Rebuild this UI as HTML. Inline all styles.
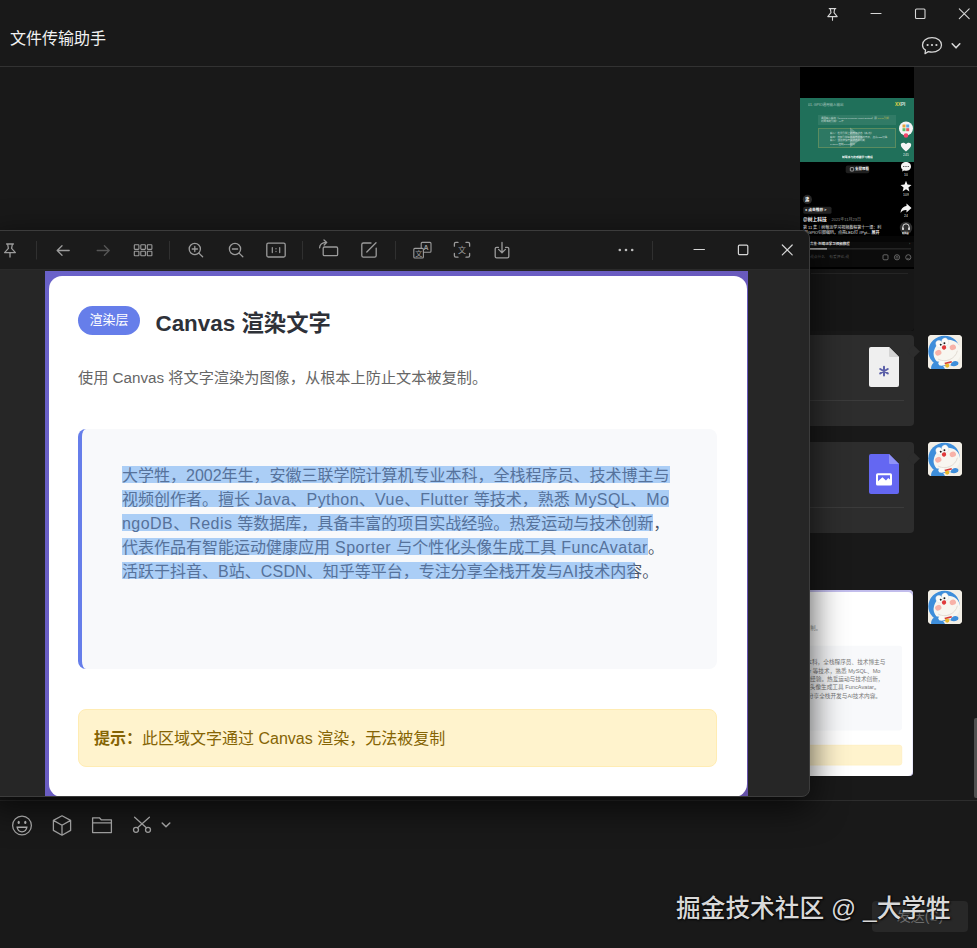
<!DOCTYPE html>
<html lang="zh-CN">
<head>
<meta charset="utf-8">
<title>文件传输助手</title>
<style>
*{box-sizing:border-box;margin:0;padding:0}
html,body{width:977px;height:948px;overflow:hidden;background:#191919}
body{position:relative;font-family:"Liberation Sans","Noto Sans CJK SC",sans-serif;color:#e8e8e8}
.abs{position:absolute}
svg{position:absolute;overflow:visible}
.hicon{stroke:#d6d6d6;fill:none;stroke-width:1.2;stroke-linecap:round;stroke-linejoin:round}
.vicon{stroke:#9b9b9b;fill:none;stroke-width:1.3;stroke-linecap:round;stroke-linejoin:round}
/* header */
#title{left:10px;top:26.5px;font-size:16px;line-height:24px;color:#f2f2f2;white-space:nowrap}
#hdiv{left:0;top:66px;width:977px;height:1px;background:#323232}
/* bubbles */
.bubble{left:664px;width:250px;height:91px;background:#2d2d2d;border-radius:4px}
.bubble .ln{position:absolute;left:10px;right:10px;top:65px;height:1px;background:#3b3b3b}
.bubble .arr{position:absolute;right:-4px;top:12px;width:9px;height:9px;background:#2d2d2d;transform:rotate(45deg)}
.avatar{left:928px;width:34px;height:34px;border-radius:4px;overflow:hidden;background:#f1ede4}
/* viewer */
#viewer{left:-10px;top:230px;width:819.5px;height:567px;background:#262626;border:1px solid #3c3c3c;border-radius:8px;overflow:hidden;box-shadow:0 10px 34px 1px rgba(0,0,0,.68)}
#vbar{left:0;top:0;width:100%;height:39px;background:#1b1b1b;border-bottom:1px solid #2a2a2a}
.vsep{width:1px;height:19px;top:10px;background:#3a3a3a}
/* card */
.imgwrap{left:54px;top:39.5px;width:703px;height:527px;background:linear-gradient(135deg,#6a62c9 0%,#6a5cc2 45%,#6450a8 100%);overflow:hidden}
.card{left:3.5px;top:5.5px;width:698.5px;height:521px;background:#fff;border-radius:13px;color:#333}
.badge{left:29.5px;top:29.5px;width:62px;height:29px;border-radius:15px;background:#667eea;color:#fff;font-size:13px;line-height:28px;text-align:center}
.ctitle{left:107px;top:32.4px;font-size:22.4px;line-height:32px;font-weight:700;color:#2e3138;white-space:nowrap}
.cdesc{left:29.5px;top:90px;font-size:15.2px;line-height:24px;color:#666;white-space:nowrap}
.quote{left:29.5px;top:152.5px;width:638.5px;height:240px;background:#f8f9fb;border-left:4px solid #667eea;border-radius:8px}
.ql{position:absolute;left:40px;height:24px;font-size:16px;line-height:25.4px;color:#4a5568;white-space:nowrap}
.hl{display:inline-block;height:17.6px;line-height:19.4px;margin-top:3px;background:#abcef6;color:#56729b;vertical-align:top;position:relative}
.ql i{font-style:normal;letter-spacing:.45px}
.half{display:inline-block;width:9px;overflow:hidden;vertical-align:top;height:19.4px}
.rest{display:inline-block;width:7px;height:24px;overflow:hidden;vertical-align:top;direction:rtl}
.hint{left:29.5px;top:433px;width:638.5px;height:58px;background:#fff3cd;border:1px solid #ffecb3;border-radius:8px;color:#856404;font-size:16px;line-height:57.6px;padding-left:15px;white-space:nowrap}
.hint b{font-weight:700}

/* video thumb */
#vid{left:800px;top:67px;width:114px;height:264px;background:#000;overflow:hidden;border-radius:0 0 3px 3px}
#vid .t{position:absolute;white-space:nowrap;color:#fff;font-size:8px;line-height:8px;transform-origin:0 0;transform:scale(.5)}
#vid .g{position:absolute;left:0;top:30.8px;width:114px;height:64.2px;background:#20705a}
/* thumb bubble */
#thumb{left:665px;top:590px;width:248px;height:186px;border-radius:4px;overflow:hidden;background:#fff}
#thumb .imgwrap{left:0;top:0;transform-origin:0 0;transform:scale(.3528)}
#thumb .ql{color:#777}
#thumb .imgwrap{background:#c2bdec}
#thumb .cdesc{color:#999}
#l4 i{letter-spacing:.53px}
#l5 i{letter-spacing:.15px}
/* input */
#idiv{left:0;top:800px;width:977px;height:1px;background:#2d2d2d}
#send{left:872px;top:901px;width:96px;height:31px;border-radius:4px;background:#282828;color:#6d6d6d;font-size:14px;line-height:31px;text-align:center}
#wm{left:676px;top:890.5px;font-size:24.7px;line-height:36px;color:#d9d9d9;white-space:nowrap;font-weight:500;text-shadow:0 0 2px rgba(0,0,0,.9),1px 1px 2px rgba(0,0,0,.8);letter-spacing:0}
#sbar{left:974px;top:718px;width:3px;height:80px;background:#4f4f4f;border-radius:2px 0 0 2px}
#icons{left:0;top:0;width:977px;height:948px;pointer-events:none}
.itx{font-family:"Liberation Sans","Noto Sans CJK SC",sans-serif;fill:#9b9b9b;stroke:none}
</style>
</head>
<body>
<!-- HEADER -->
<div class="abs" id="title">文件传输助手</div>
<div class="abs" id="hdiv"></div>


<!-- VIDEO THUMB -->
<div class="abs" id="vid">
  <div class="g"></div>
  <div class="t" style="left:8px;top:35.6px;font-size:7px;opacity:.55">01. GPIO通用输入输出</div>
  <div class="t" style="left:95px;top:34.6px;font-size:9px;font-weight:700;color:#dfe9e4"><span style="color:#e7d84a">XX</span>PI</div>
  <div class="abs" style="left:18px;top:47.5px;width:77.5px;height:10.5px;background:rgba(255,255,255,.08)"></div>
  <div class="t" style="left:21px;top:49px;font-size:5px;line-height:6px;opacity:.7">通用输入输出（General Purpose Input Output）即 <span style="color:#e6d64a">GPIO引脚</span><br>树莓派的引脚：40个</div>
  <div class="abs" style="left:18px;top:61px;width:77.5px;height:20px;background:rgba(255,255,255,.06);border:.5px solid rgba(200,190,90,.3)"></div>
  <div class="t" style="left:30px;top:63.5px;font-size:5px;line-height:7.6px;opacity:.7">输入：检测引脚上的电平状态（高/低）<br>输出：控制引脚输出高电平或低电平，点亮LED灯等<br>输入：读取按键开关状态并判断<br>Python 控制GPIO接口</div>
  <svg viewBox="0 0 114 264" width="114" height="264" style="left:0;top:0">
    <path d="M50 60.5 L63.5 70.5 L50 80.5Z" fill="rgba(255,255,255,.24)"/>
    <circle cx="106" cy="61.5" r="7" fill="#f4f4f4"/>
    <rect x="102.5" y="57.5" width="3" height="3" fill="#e8a23a"/><rect x="106.2" y="57.5" width="3" height="3" fill="#58a7e0"/><rect x="102.5" y="61.2" width="3" height="3" fill="#5fbf6a"/><rect x="106.2" y="61.2" width="3" height="3" fill="#e0585f"/>
    <circle cx="106" cy="68.5" r="2.3" fill="#f0466a"/>
    <path d="M106 84.5 C103 82 100.8 80 100.8 77.8 C100.8 75.6 104 74.8 106 77.2 C108 74.8 111.2 75.6 111.2 77.8 C111.2 80 109 82 106 84.5Z" fill="#f4f4f4"/>
    <path d="M101 99.5 C101 96.5 103.3 95 106 95 C108.7 95 111 96.5 111 99.5 C111 102.2 108.7 103.8 106 103.8 C105.3 103.8 104.7 103.7 104.1 103.5 L102 104.6 L102.6 102.7 C101.6 101.9 101 100.8 101 99.5Z" fill="#f4f4f4"/>
    <circle cx="103.8" cy="99.5" r=".6" fill="#111"/><circle cx="106" cy="99.5" r=".6" fill="#111"/><circle cx="108.2" cy="99.5" r=".6" fill="#111"/>
    <path d="M106 113.8 L107.5 117.6 L111.5 117.9 L108.4 120.5 L109.4 124.4 L106 122.3 L102.6 124.4 L103.6 120.5 L100.5 117.9 L104.5 117.6Z" fill="#f4f4f4"/>
    <path d="M106.5 136.5 L111.5 141 L106.5 145.5 V143 C103.5 142.8 101.8 143.8 100.6 146 C100.8 142.2 102.8 139.4 106.5 139Z" fill="#f4f4f4"/>
    <circle cx="106" cy="161" r="6.2" fill="#2e2e2e"/>
    <path d="M102.8 161.5 V160 A3.2 3.2 0 0 1 109.2 160 V161.5" stroke="#eee" stroke-width=".9" fill="none"/>
    <rect x="102.2" y="160.5" width="1.6" height="2.6" rx=".5" fill="#eee"/><rect x="108.2" y="160.5" width="1.6" height="2.6" rx=".5" fill="#eee"/>
    <circle cx="7.4" cy="132.4" r="4.6" fill="#2a2a2a"/>
    <rect x="3.3" y="139.8" width="28.2" height="7" rx="1.5" fill="#242424"/>
    <rect x="45.7" y="98.6" width="23.6" height="7.6" rx="2" fill="#1f1f1f"/>
    <rect x="50.3" y="100.6" width="3.4" height="3.4" rx=".6" fill="none" stroke="#eee" stroke-width=".6"/>
    <rect x="0" y="169" width="114" height="6" fill="#060606"/><rect x="0" y="175" width="114" height="25" fill="#0c0c0c"/><rect x="0" y="202" width="114" height="70" fill="#171717"/><rect x="11" y="206.2" width="97" height=".8" fill="#2a2a2a"/>
    <rect x="10" y="181.5" width="101" height=".8" fill="#3a3a3a"/>
    <rect x="10" y="181.3" width="17" height="1.2" fill="#d8d8d8"/>
    <rect x="83" y="187.8" width="5" height="5" rx="1" fill="none" stroke="#8a8a8a" stroke-width=".7"/>
    <circle cx="97" cy="190.3" r="2.6" fill="none" stroke="#8a8a8a" stroke-width=".7"/><circle cx="97" cy="190.3" r="1" fill="none" stroke="#8a8a8a" stroke-width=".5"/>
    <circle cx="108.3" cy="190.3" r="2.6" fill="none" stroke="#8a8a8a" stroke-width=".7"/><path d="M106.8 189.5 h.1 M109.6 189.5 h.1 M107 191.2 q1.3 1 2.6 0" stroke="#8a8a8a" stroke-width=".5" fill="none"/>
  </svg>
  <div class="t" style="left:41.5px;top:88.4px;font-size:5.6px;font-weight:700">树莓派与传感器学习教程</div>
  <div class="t" style="left:55px;top:100.4px;font-size:7px;font-weight:700">全屏观看</div>
  <div class="t" style="left:102.6px;top:86.2px;font-size:7px;opacity:.85">245</div>
  <div class="t" style="left:104px;top:106px;font-size:7px;opacity:.85">10</div>
  <div class="t" style="left:102.6px;top:126px;font-size:7px;opacity:.85">109</div>
  <div class="t" style="left:104px;top:147.4px;font-size:7px;opacity:.85">24</div>
  <div class="t" style="left:102px;top:164px;font-size:4.5px;font-weight:700">听抖音</div>
  <div class="t" style="left:5.2px;top:130.3px;font-size:8.5px;font-weight:700">沸</div>
  <div class="t" style="left:5px;top:141.3px;font-size:7.5px;font-weight:700">● 点击推荐 &gt;</div>
  <div class="t" style="left:3px;top:150px;font-size:9.5px;line-height:10px;font-weight:700">@树上科技</div>
  <div class="t" style="left:28.5px;top:151px;font-size:8px;color:#8d8d8d">· 2021年11月23日</div>
  <div class="t" style="left:3px;top:158px;font-size:8px;line-height:10.4px;opacity:.92">第 11 集｜树莓派学习视频教程第十一课：利<br>&nbsp;用GPIO引脚编码，点亮LED灯 #Pyt... <b>展开</b></div>
  <div class="t" style="left:10px;top:175px;font-size:7px;font-weight:700;opacity:.9">合集·树莓派学习视频教程</div>
  <div class="t" style="left:109px;top:175px;font-size:7px;color:#777">›</div>
  <div class="t" style="left:10px;top:188px;font-size:7.5px;color:#5c5c5c">说点什么&nbsp;&nbsp;&nbsp;&nbsp;有爱评论,说</div>
</div>

<!-- FILE BUBBLES -->
<div class="abs bubble" style="top:335px"><div class="ln"></div><div class="arr"></div>
  <svg viewBox="0 0 30 40" width="30" height="40" style="left:205px;top:12px"><path d="M2 0 H20 L30 10 V38 Q30 40 28 40 H2 Q0 40 0 38 V2 Q0 0 2 0Z" fill="#efefef"/><path d="M20 0 L30 10 H21 Q20 10 20 9Z" fill="#d4d4d4"/><path d="M15 19.8 V28.6 M11.2 22 L18.8 26.4 M18.8 22 L11.2 26.4" stroke="#5b5fa8" stroke-width="2" stroke-linecap="round"/></svg>
</div>
<div class="abs bubble" style="top:442px"><div class="ln"></div><div class="arr"></div>
  <svg viewBox="0 0 30 40" width="30" height="40" style="left:205px;top:12px"><path d="M2 0 H20 L30 10 V38 Q30 40 28 40 H2 Q0 40 0 38 V2 Q0 0 2 0Z" fill="#6467f2"/><path d="M20 0 L30 10 H21 Q20 10 20 9Z" fill="#8f92f6"/><rect x="7" y="19.3" width="16" height="12.3" rx="1.6" fill="#fff"/><path d="M9 21.2 H21 V25.6 L19.2 24 L17 26.4 L13.4 23.2 L9 27.2Z" fill="#6467f2"/></svg>
</div>
<div class="abs avatar" style="top:335px"><svg viewBox="0 0 34 34" width="34" height="34" style="left:0;top:0">
<rect width="34" height="34" fill="#f2eee6"/>
<g transform="rotate(-22 17 17)">
<ellipse cx="16.5" cy="15.5" rx="15.8" ry="15" fill="#3e8edb"/>
<ellipse cx="19" cy="18.4" rx="14" ry="12.4" fill="#f8f6f0"/>
<ellipse cx="14.6" cy="7.6" rx="3.3" ry="3.9" fill="#fcfbf8" stroke="#cfd6dc" stroke-width=".3"/>
<ellipse cx="21" cy="7.6" rx="3.3" ry="3.9" fill="#fcfbf8" stroke="#cfd6dc" stroke-width=".3"/>
<circle cx="15.8" cy="8.6" r="1" fill="#1c1c1c"/><circle cx="19.8" cy="8.6" r="1" fill="#1c1c1c"/>
<circle cx="17.8" cy="12.4" r="2.2" fill="#e13a3c"/>
<ellipse cx="10.5" cy="15.2" rx="3.2" ry="2.7" fill="#f7b2a8"/>
<ellipse cx="26" cy="15.6" rx="3.2" ry="2.7" fill="#f7b2a8"/>
<path d="M8 21 C13 27.5 24 27.5 29 20.5" stroke="#d8cfc6" stroke-width=".6" fill="none"/>
</g>
<path d="M3 34 C3 28 8 25 13 27.5 L17 34Z" fill="#3e8edb"/>
<path d="M22.5 30.5 C23 25.5 29.5 24.5 30.5 28 C30.5 31 26 32 22.5 30.5Z" fill="#3e8edb"/>
<ellipse cx="13.6" cy="28.3" rx="3.2" ry="2.5" fill="#fbfaf6"/>
<path d="M16.5 27.8 L23.5 26 L24 27.6 L17 29.6Z" fill="#d63b3b"/>
<circle cx="19.2" cy="30.6" r="2.1" fill="#eab92d"/>
</svg></div>
<div class="abs avatar" style="top:442px"><svg viewBox="0 0 34 34" width="34" height="34" style="left:0;top:0">
<rect width="34" height="34" fill="#f2eee6"/>
<g transform="rotate(-22 17 17)">
<ellipse cx="16.5" cy="15.5" rx="15.8" ry="15" fill="#3e8edb"/>
<ellipse cx="18.3" cy="18.6" rx="13.4" ry="12" fill="#f8f6f0"/>
<ellipse cx="14.6" cy="7.6" rx="3.3" ry="3.9" fill="#fcfbf8" stroke="#cfd6dc" stroke-width=".3"/>
<ellipse cx="21" cy="7.6" rx="3.3" ry="3.9" fill="#fcfbf8" stroke="#cfd6dc" stroke-width=".3"/>
<circle cx="15.8" cy="8.6" r="1" fill="#1c1c1c"/><circle cx="19.8" cy="8.6" r="1" fill="#1c1c1c"/>
<circle cx="17.8" cy="12.4" r="2.2" fill="#e13a3c"/>
<ellipse cx="10.5" cy="15.2" rx="3.2" ry="2.7" fill="#f7b2a8"/>
<ellipse cx="26" cy="15.6" rx="3.2" ry="2.7" fill="#f7b2a8"/>
<path d="M8 21 C13 27.5 24 27.5 29 20.5" stroke="#d8cfc6" stroke-width=".6" fill="none"/>
</g>
<path d="M3 34 C3 28 8 25 13 27.5 L17 34Z" fill="#3e8edb"/>
<path d="M22.5 30.5 C23 25.5 29.5 24.5 30.5 28 C30.5 31 26 32 22.5 30.5Z" fill="#3e8edb"/>
<ellipse cx="13.6" cy="28.3" rx="3.2" ry="2.5" fill="#fbfaf6"/>
<path d="M16.5 27.8 L23.5 26 L24 27.6 L17 29.6Z" fill="#d63b3b"/>
<circle cx="19.2" cy="30.6" r="2.1" fill="#eab92d"/>
</svg></div>
<div class="abs avatar" style="top:590px"><svg viewBox="0 0 34 34" width="34" height="34" style="left:0;top:0">
<rect width="34" height="34" fill="#f2eee6"/>
<g transform="rotate(-22 17 17)">
<ellipse cx="16.5" cy="15.5" rx="15.8" ry="15" fill="#3e8edb"/>
<ellipse cx="18.3" cy="18.6" rx="13.4" ry="12" fill="#f8f6f0"/>
<ellipse cx="14.6" cy="7.6" rx="3.3" ry="3.9" fill="#fcfbf8" stroke="#cfd6dc" stroke-width=".3"/>
<ellipse cx="21" cy="7.6" rx="3.3" ry="3.9" fill="#fcfbf8" stroke="#cfd6dc" stroke-width=".3"/>
<circle cx="15.8" cy="8.6" r="1" fill="#1c1c1c"/><circle cx="19.8" cy="8.6" r="1" fill="#1c1c1c"/>
<circle cx="17.8" cy="12.4" r="2.2" fill="#e13a3c"/>
<ellipse cx="10.5" cy="15.2" rx="3.2" ry="2.7" fill="#f7b2a8"/>
<ellipse cx="26" cy="15.6" rx="3.2" ry="2.7" fill="#f7b2a8"/>
<path d="M8 21 C13 27.5 24 27.5 29 20.5" stroke="#d8cfc6" stroke-width=".6" fill="none"/>
</g>
<path d="M3 34 C3 28 8 25 13 27.5 L17 34Z" fill="#3e8edb"/>
<path d="M22.5 30.5 C23 25.5 29.5 24.5 30.5 28 C30.5 31 26 32 22.5 30.5Z" fill="#3e8edb"/>
<ellipse cx="13.6" cy="28.3" rx="3.2" ry="2.5" fill="#fbfaf6"/>
<path d="M16.5 27.8 L23.5 26 L24 27.6 L17 29.6Z" fill="#d63b3b"/>
<circle cx="19.2" cy="30.6" r="2.1" fill="#eab92d"/>
</svg></div>

<!-- IMAGE THUMB BUBBLE -->
<div class="abs" id="thumb">
  <div class="abs imgwrap">
    <div class="abs card">
      <div class="abs badge">渲染层</div>
      <div class="abs ctitle">Canvas 渲染文字</div>
      <div class="abs cdesc">使用 Canvas 将文字渲染为图像，从根本上防止文本被复制。</div>
      <div class="abs quote">
        <div class="ql" style="top:34px">大学牲，2002年生，安徽三联学院计算机专业本科，全栈程序员、技术博主与</div>
        <div class="ql" style="top:58px">视频创作者。擅长 Java、Python、Vue、Flutter 等技术，熟悉 MySQL、Mo</div>
        <div class="ql" style="top:82px">ngoDB、Redis 等数据库，具备丰富的项目实战经验。热爱运动与技术创新，</div>
        <div class="ql" style="top:106px">代表作品有智能运动健康应用 Sporter 与个性化头像生成工具 FuncAvatar。</div>
        <div class="ql" style="top:130px">活跃于抖音、B站、CSDN、知乎等平台，专注分享全栈开发与AI技术内容。</div>
      </div>
      <div class="abs hint"><b>提示：</b>此区域文字通过 Canvas 渲染，无法被复制</div>
    </div>
  </div>
</div>
<div class="abs" id="sbar"></div>

<!-- INPUT AREA -->
<div class="abs" id="idiv"></div>
<div class="abs" id="send">发送(S)</div>
<div class="abs" id="wm">掘金技术社区 @ _大学牲</div>

<!-- VIEWER -->
<div class="abs" id="viewer">
  <div class="abs" id="vbar"></div>
  <div class="abs imgwrap">
    <div class="abs card">
      <div class="abs badge">渲染层</div>
      <div class="abs ctitle">Canvas 渲染文字</div>
      <div class="abs cdesc">使用 Canvas 将文字渲染为图像，从根本上防止文本被复制。</div>
      <div class="abs quote">
        <div class="ql" id="l1" style="top:34.3px"><span class="hl">大学牲，2002年生，安徽三联学院计算机专业本科，全栈程序员、技术博主与</span></div>
        <div class="ql" id="l2" style="top:58.3px"><span class="hl">视频创作者。擅长<i> Java</i>、<i>Python</i>、<i>Vue</i>、<i>Flutter </i>等技术，熟悉<i> MySQL</i>、<i>Mo</i></span></div>
        <div class="ql" id="l3" style="top:82.3px"><span class="hl"><i>ngoDB</i>、<i>Redis </i>等数据库，具备丰富的项目实战经验。热爱运动与技术创新</span>，</div>
        <div class="ql" id="l4" style="top:106.3px"><span class="hl">代表作品有智能运动健康应用<i> Sporter </i>与个性化头像生成工具<i> FuncAvatar</i></span>。</div>
        <div class="ql" id="l5" style="top:130.3px"><span class="hl">活跃于抖音、<i>B</i>站、<i>CSDN</i>、知乎等平台，专注分享全栈开发与<i>AI</i>技术内<span class="half">容</span></span><span class="rest">容</span>。</div>
      </div>
      <div class="abs hint"><b>提示：</b>此区域文字通过 Canvas 渲染，无法被复制</div>
    </div>
  </div>
</div>

<!-- ICON OVERLAY -->
<svg class="abs" id="icons" viewBox="0 0 977 948" width="977" height="948">
 <!-- header window controls -->
 <g class="hicon">
  <path d="M829.2 8.6 H835.8 M830.3 8.6 L831 12.6 L827.8 16.6 H837.2 L834 12.6 L834.7 8.6 M832.5 16.6 V20.2" stroke-width="1.1"/>
  <path d="M871 13.5 H881" stroke-width="1.1"/>
  <rect x="915.5" y="9" width="9.5" height="9.5" rx="1" stroke-width="1.1"/>
  <path d="M959.3 8.8 L969.2 18.7 M969.2 8.8 L959.3 18.7" stroke-width="1.1"/>
  <path d="M932 37.7 C937.5 37.7 941.5 40.9 941.5 44.9 C941.5 48.9 937.5 52.1 932 52.1 C930.7 52.1 929.4 51.9 928.3 51.6 L925 53.7 L925.5 50.1 C923.6 48.8 922.5 46.9 922.5 44.9 C922.5 40.9 926.5 37.7 932 37.7Z" stroke-width="1.25"/>
  <path d="M952.2 43.8 L956 47.8 L959.8 43.8" stroke-width="1.6"/>
 </g>
 <g fill="#d6d6d6"><circle cx="927.6" cy="45" r="1.1"/><circle cx="932" cy="45" r="1.1"/><circle cx="936.4" cy="45" r="1.1"/></g>

 <!-- viewer toolbar -->
 <g class="vicon">
  <path d="M6.6 244 H13.4 M7.6 244 L8.4 248.4 L4.6 252.6 H15.4 L11.6 248.4 L12.4 244 M10 252.6 V257"/>
  <path d="M69.2 250.5 H57.4 M62 245.7 L57.2 250.5 L62 255.3"/>
  <path d="M97.2 250.5 H109 M104.4 245.7 L109.2 250.5 L104.4 255.3" stroke="#565656"/>
  <g stroke-width="1.1"><rect x="134.3" y="244.8" width="4.6" height="4.6" rx=".6"/><rect x="140.8" y="244.8" width="4.6" height="4.6" rx=".6"/><rect x="147.3" y="244.8" width="4.6" height="4.6" rx=".6"/><rect x="134.3" y="251.2" width="4.6" height="4.6" rx=".6"/><rect x="140.8" y="251.2" width="4.6" height="4.6" rx=".6"/><rect x="147.3" y="251.2" width="4.6" height="4.6" rx=".6"/></g>
  <circle cx="194.8" cy="249" r="5.6"/><path d="M198.9 253.1 L202.6 256.8 M192.2 249 H197.4 M194.8 246.4 V251.6"/>
  <circle cx="235" cy="249" r="5.6"/><path d="M239.1 253.1 L242.8 256.8 M232.4 249 H237.6"/>
  <rect x="266.8" y="243.2" width="18.4" height="13.8" rx="1.5"/><path d="M272.3 247.6 V252.6 M279.7 247.6 V252.6" stroke-width="1.2"/><path d="M276 248.6 v.2 M276 251.4 v.2" stroke-width="1.2"/>
  <rect x="323.2" y="247" width="14.4" height="8.6" rx="1.2"/><path d="M319.6 247.8 C319.8 244.6 322.4 242.6 326.2 242.4 M324 240 L326.8 242.4 L324.2 245"/>
  <path d="M371 243 H363.4 Q361.8 243 361.8 244.6 V255.6 Q361.8 257.2 363.4 257.2 H374.6 Q376.2 257.2 376.2 255.6 V248.2 M366.8 252 L376 242.8"/>
  <g stroke-width="1.1"><rect x="413.8" y="248.4" width="9.6" height="9.6" rx="1"/><path d="M421.2 248.2 V243.4 Q421.2 242.4 422.2 242.4 H430 Q431 242.4 431 243.4 V251.2 Q431 252.2 430 252.2 H423.6"/></g>
  <path d="M454.4 246.2 V243.8 Q454.4 242.4 455.8 242.4 H458 M466 242.4 H468.2 Q469.6 242.4 469.6 243.8 V246.2 M469.6 253.4 V255.8 Q469.6 257.2 468.2 257.2 H466 M458 257.2 H455.8 Q454.4 257.2 454.4 255.8 V253.4"/>
  <path d="M498.4 247.4 H496.6 Q495.2 247.4 495.2 248.8 V256.4 Q495.2 257.8 496.6 257.8 H507.4 Q508.8 257.8 508.8 256.4 V248.8 Q508.8 247.4 507.4 247.4 H505.6 M502 242.4 V252.6 M498.6 249.4 L502 252.8 L505.4 249.4"/>
 </g>
 <text class="itx" x="415.3" y="256.2" font-size="7">文</text>
 <text class="itx" x="423.6" y="250.2" font-size="7" font-weight="700">A</text>
 <text class="itx" x="458" y="252.8" font-size="8">文</text>
 <g fill="#bdbdbd"><circle cx="619.8" cy="250" r="1.3"/><circle cx="626" cy="250" r="1.3"/><circle cx="632.2" cy="250" r="1.3"/></g>
 <g stroke="#303030" stroke-width="1"><path d="M36.5 241 V259.5 M169.5 241 V259.5 M302.5 241 V259.5 M395.5 241 V259.5 M652.5 241 V260"/></g>
 <g class="hicon" stroke="#cfcfcf" stroke-width="1.1">
  <path d="M694 249.5 H704.4"/>
  <rect x="738.4" y="245.2" width="9.4" height="9.4" rx="1"/>
  <path d="M782.3 245 L792.2 254.9 M792.2 245 L782.3 254.9"/>
 </g>

 <!-- input toolbar -->
 <g class="vicon" stroke="#a8a8a8" stroke-width="1.25">
  <circle cx="22" cy="825.5" r="9.4"/>
  <path d="M62 815.8 L70.6 820.4 V830.4 L62 835.2 L53.4 830.4 V820.4 Z M53.4 820.4 L62 825.2 L70.6 820.4 M62 825.2 V835.2"/>
  <path d="M92.6 832.6 V817.8 H99.4 L101.2 819.8 H111.4 V832.6 Z M92.6 822.8 H111.4"/>
  <circle cx="136" cy="829.8" r="2.5"/><circle cx="148" cy="829.8" r="2.5"/><path d="M137.6 827.8 L149.4 817.2 M146.4 827.8 L134.6 817.2"/>
  <path d="M162.2 823 L166 826.8 L169.8 823" stroke-width="1.5"/>
 </g>
 <g fill="#a8a8a8"><ellipse cx="18.7" cy="822.4" rx="1.1" ry="1.7"/><ellipse cx="25.3" cy="822.4" rx="1.1" ry="1.7"/><path d="M16.4 826.6 H27.6 C27.2 830.6 24.9 832.4 22 832.4 C19.1 832.4 16.8 830.6 16.4 826.6Z M18 828 C18.6 830.2 20.2 831.2 22 831.2 C23.8 831.2 25.4 830.2 26 828Z" fill-rule="evenodd"/></g>
</svg>
</body>
</html>
